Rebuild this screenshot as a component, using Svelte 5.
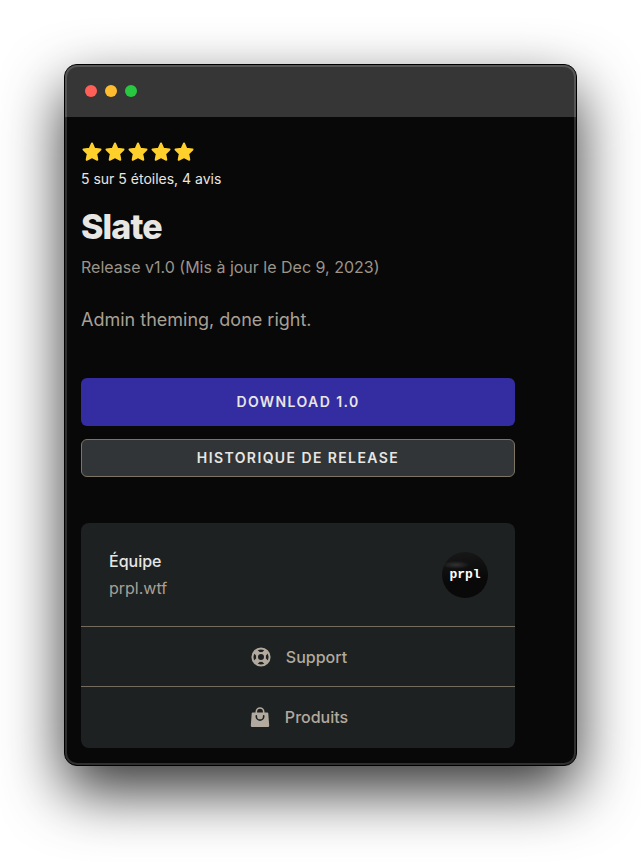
<script lang="ts">
  interface Release {
    name: string;
    version: string;
    updated: string;
    tagline: string;
    rating: number;
    reviews: number;
  }

  const release: Release = {
    name: 'Slate',
    version: '1.0',
    updated: 'Dec 9, 2023',
    tagline: 'Admin theming, done right.',
    rating: 5,
    reviews: 4,
  };

  const stars = Array.from({ length: release.rating }, (_, i) => i);
</script>

<main class="stage">
  <div class="window">
    <div class="titlebar" aria-hidden="true">
      <span class="dot close"></span>
      <span class="dot minimize"></span>
      <span class="dot expand"></span>
    </div>

    <div class="content">
      <div class="stars" aria-hidden="true">
        {#each stars as star (star)}
          <svg class="star" viewBox="0 0 22 22">
            <path
              d="M11 2.500l2.400 5.300 6.100.7-4.300 4.300 1.100 6L11 16.200l-5.300 2.600 1.100-6L2.500 8.500l6.100-.7z"
            />
          </svg>
        {/each}
      </div>
      <p class="reviews">{release.rating} sur 5 étoiles, {release.reviews} avis</p>

      <h1>{release.name}</h1>
      <p class="version">Release v{release.version} (Mis à jour le {release.updated})</p>
      <p class="tagline">{release.tagline}</p>

      <div class="actions">
        <button class="btn primary" type="button">Download {release.version}</button>
        <button class="btn secondary" type="button">Historique de release</button>
      </div>

      <section class="card">
        <div class="team">
          <div>
            <h2>Équipe</h2>
            <p>prpl.wtf</p>
          </div>
          <div class="avatar">prpl</div>
        </div>

        <a class="card-link" href="#support">
          <svg class="icon" viewBox="0 0 20 20">
            <circle class="buoy" cx="10" cy="10" r="8.600" />
            <circle class="buoy" cx="10" cy="10" r="4" />
            <path class="straps" d="M4.300 4.300l3 3M15.700 4.300l-3 3M15.700 15.700l-3-3M4.300 15.700l3-3" />
          </svg>
          Support
        </a>
        <a class="card-link" href="#produits">
          <svg class="icon" viewBox="0 0 20 20">
            <path class="handle" d="M6.300 7V4.700a3.700 3.700 0 0 1 7.400 0V7" />
            <path
              class="bag"
              d="M2.700 5.500h14.600a1 1 0 0 1 1 .9l.9 12.100a1.400 1.400 0 0 1-1.400 1.500H2.200a1.400 1.400 0 0 1-1.400-1.500l.9-12.100a1 1 0 0 1 1-.9z"
            />
            <path class="smile" d="M6.300 8.800v.6a3.700 3.700 0 0 0 7.400 0v-.6" />
          </svg>
          Produits
        </a>
      </section>
    </div>
  </div>
</main>

<style>
  :global(body) {
    margin: 0;
    background: #fff;
  }

  .stage {
    padding: 64px 64px 96px;
    font-family: Inter, 'Liberation Sans', sans-serif;
    font-size: 16px;
    line-height: 24px;
    color: #a8a095;
  }

  .window {
    position: relative;
    border: 1px solid #000;
    border-radius: 13px;
    background: #080808;
    box-shadow: 0 25px 60px rgba(0, 0, 0, 0.8);
  }
  /* light rim drawn over the title bar and the body */
  .window::after {
    content: '';
    position: absolute;
    inset: 0;
    border: 2px solid rgba(255, 255, 255, 0.16);
    border-radius: 12px;
    pointer-events: none;
  }

  .titlebar {
    display: flex;
    align-items: center;
    gap: 8px;
    height: 52px;
    padding: 0 20px;
    border-radius: 12px 12px 0 0;
    background: #363636;
  }

  .dot {
    width: 12px;
    height: 12px;
    border-radius: 50%;
  }
  .close {
    background: #ff5f57;
  }
  .minimize {
    background: #febc2e;
  }
  .expand {
    background: #28c840;
  }

  .content {
    padding: 24px 61px 17px 16px;
  }

  h1,
  h2,
  p {
    margin: 0;
  }

  .stars {
    display: flex;
    gap: 1px;
  }
  .star {
    width: 22px;
    height: 22px;
    fill: #ffd02b;
    stroke: #ffd02b;
    stroke-width: 2;
    stroke-linejoin: round;
  }

  .reviews {
    margin-top: 6px;
    font-size: 14px;
    line-height: 20px;
    color: #e8e6e3;
  }

  h1 {
    margin-top: 18px;
    font-size: 34px;
    line-height: 40px;
    font-weight: 800;
    letter-spacing: -0.025em;
    color: #e8e6e3;
  }

  .version {
    margin-top: 8px;
    color: #9c9488;
  }

  .tagline {
    margin-top: 27px;
    font-size: 18px;
    line-height: 28px;
  }

  .actions {
    display: flex;
    flex-direction: column;
    gap: 13px;
    margin-top: 44px;
  }

  .btn {
    height: 48px;
    padding: 0 16px;
    border: 0;
    border-radius: 6px;
    font: inherit;
    font-size: 14px;
    font-weight: 600;
    letter-spacing: 0.1em;
    text-transform: uppercase;
    color: #e8e6e3;
    cursor: pointer;
  }
  .primary {
    background: #342ca1;
  }
  .secondary {
    height: 38px;
    border: 1px solid #7d7464;
    background: #313537;
  }

  .card {
    margin-top: 46px;
    padding-bottom: 2px;
    border-radius: 8px;
    background: #1e2122;
  }

  .team {
    display: flex;
    align-items: center;
    justify-content: space-between;
    height: 103px;
    padding: 0 27px 0 28px;
  }
  .team h2 {
    font-size: 16px;
    line-height: 27px;
    font-weight: 500;
    color: #e8e6e3;
  }
  .team p {
    line-height: 27px;
  }

  .avatar {
    display: flex;
    align-items: center;
    justify-content: center;
    width: 46px;
    height: 46px;
    border-radius: 50%;
    background:
      radial-gradient(ellipse 14px 4px at 30% 28%, #333, transparent),
      linear-gradient(170deg, #191919, #090909 60%);
    font-family: 'Liberation Mono', monospace;
    font-size: 13px;
    line-height: 16px;
    font-weight: 700;
    color: #fff;
  }

  .card-link {
    display: flex;
    align-items: center;
    justify-content: center;
    gap: 15px;
    box-sizing: border-box;
    height: 60px;
    padding-left: 2px;
    border-top: 1px solid #736b5e;
    font-weight: 500;
    color: #b2aa9e;
    text-decoration: none;
  }

  .icon {
    width: 20px;
    height: 20px;
    fill: none;
    stroke: #b2aa9e;
  }
  .buoy {
    stroke-width: 2;
  }
  .straps {
    stroke-width: 5;
  }
  .handle {
    stroke-width: 1.6;
  }
  .bag {
    fill: #b2aa9e;
    stroke: none;
  }
  .smile {
    stroke: #1e2122;
    stroke-width: 1.6;
    stroke-linecap: round;
  }
</style>
